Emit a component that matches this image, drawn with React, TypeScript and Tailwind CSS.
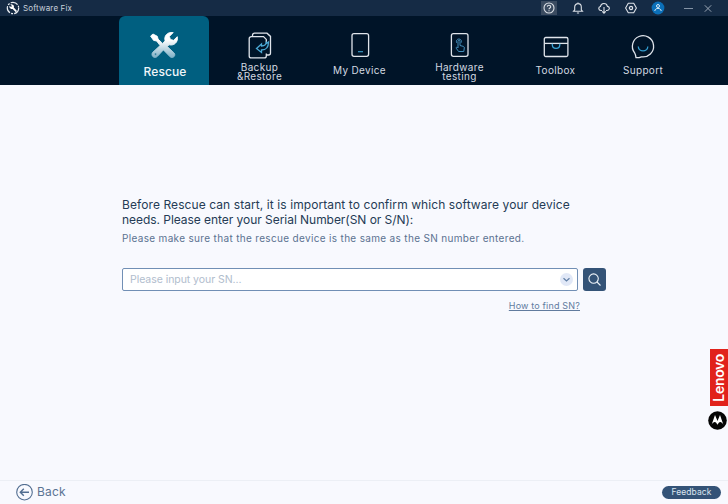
import type { ReactNode } from 'react';

function Logo() {
  return (
    <svg className="h-[14px] w-[14px]" viewBox="0 0 14 14" fill="none">
      <circle cx="7" cy="7" r="5.7" stroke="#e9edf2" strokeWidth="1.2" strokeDasharray="7.5 1.2 2 1.2" />
      <path d="M4.2 3.5 6 3.2 8 4.7 7.8 6.5 11 10 9.9 11.2 6.6 7.9 5 8 3.3 6.2 3.6 4.7 5 6 6 5.1Z" fill="#fff" />
    </svg>
  );
}

function TitleBar() {
  return (
    <div className="flex h-4 items-center bg-[#152b45] pl-[6px] text-[#c8d0da]">
      <Logo />
      <span className="ml-[3px] flex-1 text-[8px] leading-4 tracking-[0.16px]">Software Fix</span>
      <div className="flex h-4 w-[187px] items-center">
        <div className="flex h-[14px] w-4 items-center justify-center bg-[#3a4b60]">
          <svg className="h-3 w-3" viewBox="0 0 12 12" fill="none" stroke="#dce1e7" strokeWidth="1.1">
            <circle cx="6" cy="6" r="5" />
            <path d="M4.3 4.8C4.3 2.6 7.7 2.7 7.7 4.7C7.7 6 6 5.9 6 7.2M6 8.2v1" />
          </svg>
        </div>
        <svg className="ml-[15px] h-3 w-3" viewBox="0 0 12 12" fill="none" stroke="#dce1e7" strokeWidth="1.1">
          <path d="M1.5 9.3h9L9.3 7.8V5C9.3.5 2.7.5 2.7 5v2.8ZM4.9 11h2.2M6 .5v1" />
        </svg>
        <svg className="ml-[14px] h-3 w-3" viewBox="0 0 12 12" fill="none" stroke="#dce1e7" strokeWidth="1.1">
          <path d="M4 8.5H3C.2 8.3.1 5 2.5 4.5 3 .8 8.4.4 9.4 4.4 12.2 4.8 12 8.4 9 8.5H8M6 5v6M4.2 9.3 6 11.1 7.8 9.3" />
        </svg>
        <svg className="ml-[15px] h-3 w-3" viewBox="0 0 12 12" fill="none" stroke="#dce1e7" strokeWidth="1.1">
          <path d="M3.3 1.2h5.4L11.4 6 8.7 10.8H3.3L.6 6Z" strokeLinejoin="round" />
          <circle cx="6" cy="6" r="1.6" strokeWidth="1.3" />
        </svg>
        <svg className="ml-[14px] h-[14px] w-[14px]" viewBox="0 0 14 14" fill="none" stroke="#d5e8f8">
          <circle cx="7" cy="7" r="6.4" fill="#0b6fb8" stroke="none" />
          <circle cx="7" cy="5" r="1.5" />
          <path d="M3.8 10C4 6.5 10 6.5 10.2 10" />
        </svg>
        <svg className="ml-[19px] h-[10px] w-[9px]" viewBox="0 0 9 10" stroke="#8493a5">
          <path d="M0 5.5h9" />
        </svg>
        <svg className="ml-[11px] h-2 w-2" viewBox="0 0 8 8" stroke="#9aa6b5">
          <path d="m.8 1.3 6.4 6.4M7.2 1.3.8 7.7" />
        </svg>
      </div>
    </div>
  );
}

function NavItem({ icon, children, width }: { icon: ReactNode; children: ReactNode; width: string }) {
  return (
    <div className={`flex flex-col items-center pt-4 ${width}`}>
      <div className="h-7">{icon}</div>
      <div className="flex h-5 items-center text-center text-[10px] leading-5 tracking-[0.34px] text-[#d3d9e1]">
        {children}
      </div>
    </div>
  );
}

function TwoLines({ first, second }: { first: string; second: string }) {
  return (
    <div className="flex flex-col pt-[3px]">
      <span className="leading-[9px]">{first}</span>
      <span className="leading-[9px]">{second}</span>
    </div>
  );
}

const navSvg = 'h-7 w-7';

function NavBar() {
  return (
    <nav className="flex h-[69px] bg-[#001428] pl-[119px]">
      <div className="flex w-[90px] flex-col items-center rounded-t-[6px] bg-[#005f80] pt-[15px]">
        <svg className="h-7 w-7" viewBox="0 0 28 28">
          <defs>
            <linearGradient id="steel" x1="0" y1="0" x2="0" y2="1">
              <stop offset="0.3" stopColor="#ffffff" />
              <stop offset="1" stopColor="#7eb0c6" />
            </linearGradient>
          </defs>
          <path
            d="M.6 5.1 3 3l4.3 2.3.8 2.8 4.4 4.3 2.6-2.5C13.7 5.5 17 .5 23.2 1.6l-3.8 3.8 1 3.1 3.2.8 3.7-3.6c1.2 5.8-3.9 9.4-8.2 8.1l-1.8 1.7 6.8 6.5c2.3 2.8-1.5 6-3.9 3.9l-6.8-7-5.9 6.4c-3 3.2-7.4-.8-4.7-4.1l7.3-6.6L6.6 10l-3-.6ZM5.6 22a1.1 1.1 0 1 0 .1 2.2A1.1 1.1 0 0 0 5.6 22"
            fill="url(#steel)"
            stroke="url(#steel)"
            strokeWidth="0.9"
            fillRule="evenodd"
          />
        </svg>
        <span className="mt-[5px] ml-[2px] text-[12px] leading-4 font-medium tracking-[0.08px] text-[#f0f6f9]">
          Rescue
        </span>
      </div>
      <NavItem
        width="w-[101px]"
        icon={
          <svg className={navSvg} viewBox="0 0 28 28" fill="none" stroke="#dfe4eb" strokeWidth="1.3">
            <path d="M20.3 21.5v2.4a2 2 0 0 1-2 2H5.2a2 2 0 0 1-2-2V6.6a2 2 0 0 1 2-2h12.3l2.8 2.8v3" />
            <path d="M6.5 4.4V3.2a2 2 0 0 1 2-2H21l3.5 3.2v16.6a2 2 0 0 1-2 2h-2.2" />
            <path d="m15.5 12-5 4.5 5 4v-2.5c6 0 7-4 7-8l-2.2 1.5V9.5c0 3-2 4.5-4.8 4.5Z" stroke="#4aa9d6" />
          </svg>
        }
      >
        <TwoLines first="Backup" second="&amp;Restore" />
      </NavItem>
      <NavItem
        width="w-[99px]"
        icon={
          <svg className={navSvg} viewBox="0 0 28 28" fill="none" stroke="#dfe4eb" strokeWidth="1.3">
            <rect x="6" y="1.7" width="16.6" height="22.6" rx="2" />
            <path d="M12 19.7h5" stroke="#3ba0cf" strokeWidth="1.1" />
          </svg>
        }
      >
        My Device
      </NavItem>
      <NavItem
        width="w-[101px]"
        icon={
          <svg className={navSvg} viewBox="0 0 28 28" fill="none" stroke="#dfe4eb" strokeWidth="1.3">
            <rect x="5.4" y="1.7" width="16.6" height="22.6" rx="2" />
            <g stroke="#438ebb" strokeWidth="1">
              <path d="M12 16V9.3c0-1.5 2-1.5 2 0v4.2l3.4.9c.8.3 1 .8.9 1.5l-.5 3.6h-5.2l-2.4-3.3c-.4-1 .8-1.5 1.8-.2Z" />
              <path d="M10.7 10.8c-1.8-4.8 5.8-5.2 4.6-.2" />
            </g>
          </svg>
        }
      >
        <TwoLines first="Hardware" second="testing" />
      </NavItem>
      <NavItem
        width="w-[91px]"
        icon={
          <svg className={navSvg} viewBox="0 0 28 28" fill="none" stroke="#dfe4eb" strokeWidth="1.3">
            <rect x="2.3" y="5.5" width="23.6" height="19" rx="1.5" />
            <path d="M2.3 11.4h23.6" />
            <path d="M10.3 11.7v1c0 4.8 7.5 4.8 7.5 0v-1" stroke="#39a6d6" />
          </svg>
        }
      >
        Toolbox
      </NavItem>
      <NavItem
        width="w-[84px]"
        icon={
          <svg className={navSvg} viewBox="0 0 28 28" fill="none" stroke="#dfe4eb" strokeWidth="1.3">
            <path d="M7 25.7c1.8.1 3.7-.2 5.4-.9A10.6 10.6 0 1 0 5.6 20.8c.9 1.6 1.2 3.2 1.4 4.9Z" strokeLinejoin="round" />
            <path d="M9.3 14.5c0 5.8 9.5 5.8 9.5 0" stroke="#319bcd" />
          </svg>
        }
      >
        Support
      </NavItem>
    </nav>
  );
}

function SideBrands() {
  return (
    <div className="ml-auto flex w-5 flex-col items-end pt-[264px]">
      <div className="flex h-[57px] w-[18px] items-center justify-center bg-[#e1221b] pt-[1px]">
        <span className="rotate-180 text-[14px] leading-[18px] font-semibold tracking-[-0.3px] text-white [writing-mode:vertical-rl]">
          Lenovo
        </span>
      </div>
      <svg className="mt-[5px] mr-[1px] h-[19px] w-[19px]" viewBox="0 0 19 19">
        <circle cx="9.5" cy="9.5" r="9.3" fill="#050505" />
        <path d="M3.6 13.8 7 4l2.5 6L12 4l3.4 9.8c-.9-2-2.1-2.9-3.1-2.9-1.2 0-1.9 1-2.8 2.9-.9-1.9-1.6-2.9-2.8-2.9-1 0-2.2.9-3.1 2.9Z" fill="#fff" />
      </svg>
    </div>
  );
}

export default function App() {
  return (
    <div className="flex h-[504px] w-[728px] flex-col overflow-hidden bg-[#f8f9fe] font-[Inter,sans-serif]">
      <TitleBar />
      <NavBar />
      <div className="flex h-[395px]">
        <main className="ml-[122px] w-[486px] pt-[112px]">
          <h1 className="flex flex-col text-[12px] leading-[15px] whitespace-nowrap text-[#253b55]">
            <span className="tracking-[0.085px]">
              Before Rescue can start, it is important to confirm which software your device
            </span>
            <span className="tracking-[-0.045px]">needs. Please enter your Serial Number(SN or S/N):</span>
          </h1>
          <p className="mt-[3px] text-[10px] leading-4 tracking-[0.33px] whitespace-nowrap text-[#5b7291]">
            Please make sure that the rescue device is the same as the SN number entered.
          </p>
          <div className="mt-[22px] flex gap-[5px]">
            <div className="flex h-[23px] w-[456px] items-center rounded-[2px] border border-[#718fb5] bg-white pr-1 pl-[7px]">
              <span className="flex-1 text-[10.5px] tracking-[-0.05px] text-[#b1bdcd]">Please input your SN...</span>
              <svg className="h-[13px] w-[13px]" viewBox="0 0 13 13" fill="none">
                <circle cx="6.5" cy="6.5" r="6.5" fill="#e1e8f7" />
                <path d="m3.5 5.3 3 2.7 3-2.7" stroke="#6280a6" strokeWidth="1.3" />
              </svg>
            </div>
            <div className="flex h-[23px] w-[23px] items-center justify-center rounded-[3px] bg-[#345377]">
              <svg className="h-[13px] w-[13px]" viewBox="0 0 13 13" fill="none" stroke="#eef3f8" strokeWidth="1.1">
                <circle cx="5.6" cy="5.6" r="4.7" />
                <path d="m9 9 3.5 3.5" />
              </svg>
            </div>
          </div>
          <div className="mt-[7px] w-[458px] text-right text-[9px] leading-4 tracking-[0.17px] text-[#617b9e] underline">
            How to find SN?
          </div>
        </main>
        <SideBrands />
      </div>
      <footer className="flex h-6 items-center border-t border-[#eceff5] pr-[7px] pb-[1px] pl-4">
        <svg className="h-[17px] w-[17px]" viewBox="0 0 17 17" fill="none" stroke="#526e91" strokeWidth="1.1">
          <circle cx="8.5" cy="8.2" r="7.8" />
          <path d="M13 8.2H4.5M7.8 4.7 4.3 8.2 7.8 11.7" strokeWidth="1.4" />
        </svg>
        <span className="ml-1 flex-1 text-[12px] tracking-[0.2px] text-[#5b7493]">Back</span>
        <div className="flex h-[13px] w-[59px] items-center justify-center rounded-full bg-[#345377] text-[8.5px] leading-[13px] tracking-[0.05px] text-[#dbe5f0]">
          Feedback
        </div>
      </footer>
    </div>
  );
}
